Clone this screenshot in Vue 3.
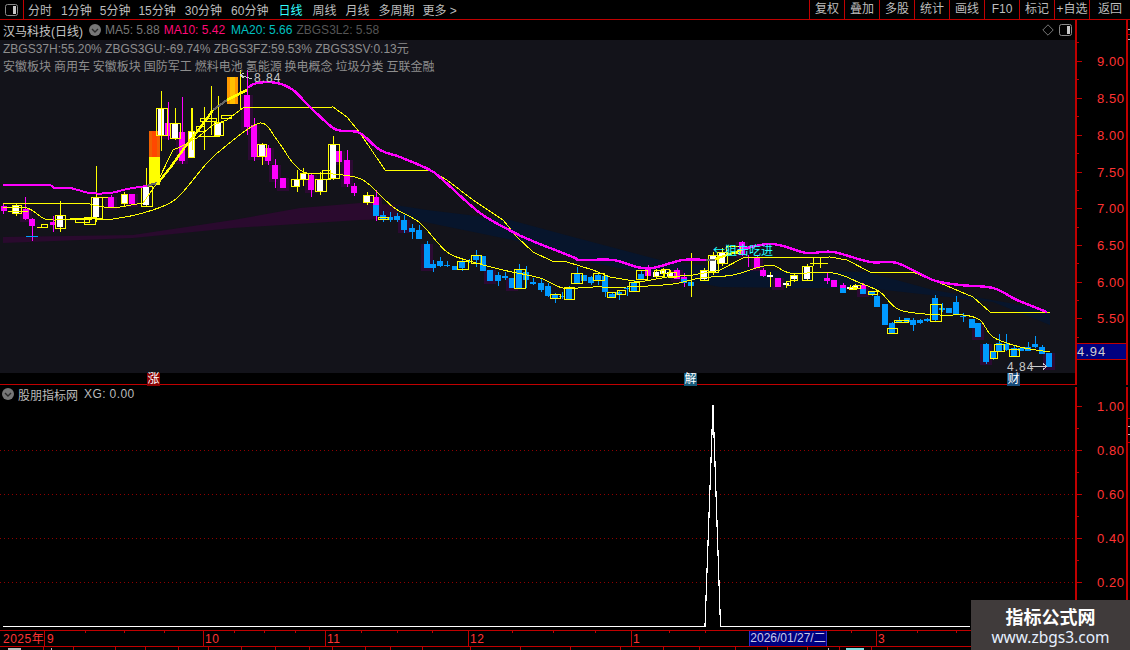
<script setup>
const leftTabs = [
  { t: '分时', x: 4 }, { t: '1分钟', x: 9 }, { t: '5分钟', x: 8 }, { t: '15分钟', x: 8 }, { t: '30分钟', x: 9 },
  { t: '60分钟', x: 9 }, { t: '日线', x: 10, on: true }, { t: '周线', x: 10 }, { t: '月线', x: 9 }, { t: '多周期', x: 9 }, { t: '更多 >', x: 8 }
]
const rightBtns = ['复权', '叠加', '多股', '统计', '画线', 'F10', '标记', '+自选', '返回']
const concepts = '安徽板块 商用车 安徽板块 国防军工 燃料电池 氢能源 换电概念 垃圾分类 互联金融'

const band1 = '3,237 133,235 233,220 300,208 360,203 400,205 400,219 360,220 233,228 133,238 3,243'
const band2 = '395,205 427,210 510,220 573,237 660,260 743,270 867,272 933,290 1050,310 1050,325 993,302 867,288 800,288 720,287 593,263 527,243 400,217'

function smooth(str) {
  const p = str.split(' ').map(s => s.split(',').map(Number))
  let d = `M${p[0][0]} ${p[0][1]}`
  for (let i = 0; i < p.length - 1; i++) {
    const a = p[Math.max(i - 1, 0)], b = p[i], c = p[i + 1], e = p[Math.min(i + 2, p.length - 1)]
    const k = 6
    const c1 = [b[0] + (c[0] - a[0]) / k, b[1] + (c[1] - a[1]) / k]
    const c2 = [c[0] - (e[0] - b[0]) / k, c[1] - (e[1] - b[1]) / k]
    d += `C${c1[0].toFixed(1)} ${c1[1].toFixed(1)} ${c2[0].toFixed(1)} ${c2[1].toFixed(1)} ${c[0]} ${c[1]}`
  }
  return d
}

const magentaA = smooth('3,185 47,185 55,188 70,188 90,193 110,193 127,189 140,187 147,186')
const greyA = '147,186 157,183'
const thickY = '157,184 170,168 185,147 200,128 213,110'
const greyB = '213,110 227,100'
const thickY2 = '227,100 247,90'
const magentaB = smooth('247,88 257,83 277,83 293,90 310,107 333,128 345,131 360,133 380,150 400,157 430,170 443,180 480,213 513,232 530,240 573,257 580,260 613,260 637,267 653,268 683,260 706,260')
const greyC = '706,260 715,260'
const thickY3 = '715,259 742,250'
const magentaC = smooth('742,249 767,244 783,246 807,253 833,252 870,262 897,263 933,280 960,285 993,288 1017,300 1047,312')
const yellow1 = '3,203 87,203 93,205 110,208 120,207 143,203 157,183 173,150 180,147 197,138 213,125 227,120 243,108 333,107 347,117 360,133 385,170 430,170 447,180 473,200 503,220 517,237 533,252 552,261 567,262 593,270 610,277 640,282 667,277 693,275 720,270 743,258 830,257 847,260 870,272 913,272 933,280 973,297 990,312 1050,312'
const yellow2 = smooth('3,208 27,208 43,218 53,220 93,219 113,219 143,213 170,203 183,192 207,163 227,145 260,123 277,140 293,163 307,173 333,174 363,180 393,207 420,223 447,252 473,262 503,270 540,278 563,288 593,287 627,287 673,284 700,278 733,275 770,265 790,273 833,273 860,283 880,292 900,310 940,315 963,315 980,320 993,337 1020,347 1050,352')

// x, top, bottom, wick top, wick bottom, kind (m magenta, b blue, w white)
const bodies = [
  [3.5,206,211,204,214,'m'],[16,206,213,204,216,'w'],[25.5,209,219,197,220,'m'],[32,219,226,218,241,'m'],[53,222,225,216,232,'m'],
  [60,216,227,201,232,'w'],[96,198,217,166,222,'w'],[111,197,207,195,208,'m'],[124,195,203,192,206,'w'],[132,194,204,194,204,'m'],
  [146,187,205,168,206,'w'],[161,108,135,91,151,'w'],[168,123,136,102,140,'m'],[175,124,138,108,140,'w'],[182,132,161,97,164,'m'],
  [191,132,157,108,158,'w'],[218,123,135,96,137,'w'],[247,95,127,70,135,'m'],[254,125,157,118,161,'m'],[262,144,156,143,165,'w'],
  [268,148,161,145,165,'m'],[275,165,179,159,188,'m'],[283,178,188,178,188,'m'],[297,180,186,170,192,'w'],[303,173,179,168,186,'w'],
  [311,175,190,173,197,'m'],[320,179,192,172,195,'w'],[333,145,178,136,180,'w'],[339,151,162,150,172,'m'],[347,160,184,150,187,'m'],
  [354,186,193,183,196,'m'],[367,196,203,192,205,'w'],[376,197,216,190,221,'m2'],
  [383,215,220,211,222,'b'],[390,217,220,212,222,'b'],[397,216,220,213,222,'b'],[404,220,230,215,233,'b'],[412,228,232,224,239,'b'],
  [419,230,239,225,239,'b'],[427,244,268,241,268,'b'],[433,264,268,260,272,'b'],[440,261,266,257,267,'b'],[447,265,266,261,267,'b'],
  [455,266,270,266,270,'b'],[462,262,268,259,271,'b'],[469,261,262,259,263,'b'],[476,255,260,250,267,'b'],[483,256,271,256,271,'b'],
  [490,270,281,270,281,'b'],[498,275,281,272,286,'b'],[505,276,278,272,280,'b'],[512,278,288,278,288,'b'],[519,269,288,264,288,'b'],
  [526,272,280,266,288,'b'],[533,282,284,278,285,'b'],[541,283,290,279,292,'b'],[548,286,296,283,297,'b'],[555,294,299,293,303,'b'],
  [562,296,297,292,299,'b'],[569,287,299,286,299,'b'],[577,273,283,267,283,'b'],[584,275,281,275,281,'b'],[591,277,283,276,285,'b'],
  [598,275,280,273,285,'b'],[605,276,292,275,297,'b'],[612,294,297,292,298,'b'],[619,292,295,291,300,'b'],[627,288,289,286,296,'b'],
  [634,282,291,280,291,'b'],[641,274,279,270,279,'b'],[648,268,276,265,276,'m'],[656,272,277,269,278,'w'],[663,270,274,268,277,'w'],
  [670,272,277,270,278,'w'],[677,270,279,268,279,'m'],[684,277,283,273,287,'m2'],[691,282,286,280,286,'b'],[704,271,279,268,281,'w'],
  [713,255,272,252,275,'w'],[722,252,263,248,266,'w'],[742,242,255,241,256,'m'],[748,257,258,255,267,'m'],[757,258,268,256,268,'m'],
  [763,270,276,268,277,'m'],[770,275,277,272,287,'w'],[778,278,287,278,287,'m'],[786,283,285,282,288,'w'],[794,276,279,274,282,'w'],
  [807,267,279,264,280,'w'],[827,278,281,273,284,'m'],[834,280,287,280,287,'m'],[843,285,293,283,293,'m2'],[850,287,289,285,290,'w'],
  [855,286,288,284,290,'w'],[863,285,294,283,294,'m2'],[872,292,294,291,296,'b'],[877,296,307,295,307,'b'],[885,304,325,304,325,'b'],
  [892,323,333,322,333,'b'],[899,320,322,317,323,'b'],[907,318,322,318,323,'b'],[913,320,325,318,331,'b'],[920,320,323,319,324,'b'],
  [927,319,321,318,322,'b'],[935,298,320,295,321,'b'],[942,308,310,303,312,'b'],[949,308,313,308,313,'b'],[956,302,314,296,314,'b'],
  [963,316,317,313,322,'b'],[972,319,328,319,328,'b'],[978,323,337,323,337,'b'],[986,344,362,343,364,'b'],[993,351,358,351,360,'b'],
  [999,343,351,334,351,'b'],[1006,344,350,334,351,'b'],[1014,348,356,346,356,'b'],[1021,348,351,347,351,'b'],[1028,347,351,342,351,'b'],
  [1035,344,347,336,348,'b'],[1042,347,354,345,354,'b'],[1049,353,367,353,367,'b']
]
// yellow hollow boxes: x, y, w, h
const boxes = [
  [12,205,9,8],[41,224,6,3],[55,215,10,13],[75,219,14,3],[84,217,11,7],[91,197,11,21],[121,194,6,9],[141,186,11,20],[156,108,11,27],[170,123,10,15],
  [188,131,6,26],[196,126,8,5],[200,118,16,3],[214,122,9,13],[221,115,10,3],[257,144,9,12],[291,179,8,7],[300,173,8,6],[315,179,11,12],[328,144,11,34],
  [322,170,8,9],[363,195,10,7],[378,217,10,2],[457,261,11,8],[471,255,10,8],[514,269,11,19],[550,294,10,4],[564,287,10,12],[571,273,11,10],
  [593,273,11,7],[607,292,8,5],[617,290,8,4],[629,282,10,9],[636,270,11,9],[654,270,10,6],[661,269,8,4],[668,272,8,5],[700,270,8,10],[708,255,10,17],
  [717,252,10,11],[726,246,14,7],[786,281,4,4],[790,275,7,5],[802,266,10,14],[849,287,7,2],[853,285,7,3],[868,291,9,3],[887,328,10,5],
  [894,320,14,2],[930,304,11,17],[994,344,10,7],[990,351,7,7],[1009,349,10,7]
]
const yWicks = [[161,91,151],[204,107,150],[211,86,135],[192,108,150],[240,70,110],[691,253,297],[820,258,268],[60,201,215],[96,166,197],[146,168,186],[813,258,266]]
const yBars = [[8,211,20,1],[37,227,10,1],[70,218,30,1],[810,263,18,1],[200,136,20,1],[102,197,6,1]]

function wickColor(k) { return k === 'w' ? '#ffff00' : (k === 'b' ? '#0099ff' : '#ff00ff') }
const candles = bodies.map(([x, t, b, wt, wb, k]) => ({
  x, t, b, wt, wb, k,
  wick: wickColor(k),
  halo: b - t >= 9 && k !== 'w' && (k !== 'b' || x > 1040 || x === 986 || x === 978 || x === 427 || x === 404 || x === 512 || x === 490),
  fill: k === 'w' ? '#ffffff' : (k === 'b' ? '#0099ff' : '#ff00ff')
}))

const priceLabels = [['9.00',61],['8.50',98],['8.00',135],['7.50',172],['7.00',208],['6.50',245],['6.00',282],['5.50',318]]
const priceMinor = [42,79,116,153,190,227,263,300,337]
const subLabels = [['1.00',406],['0.80',450],['0.60',494],['0.40',538],['0.20',582]]
const subMinor = [428,472,516,560,604]
const gridYs = [450,494,538,582]
const timeLabels = [['9',47,44.5],['10',205,203],['11',327,325],['12',470,468],['1',633,631],['3',878,876]]
const timeTicks = [85,124,164,234,264,295,361,397,432,512,553,595,669,705,851,917,956]
const footDividers = [43,73,115,145,178,208,241,275,309,332,365,390,422,470,520,570,620,663,699,735,767,807,839,871]
</script>

<template>
  <div class="app">
    <header class="toolbar">
      <div class="logo-cell">
        <svg class="toggle" viewBox="0 0 13 12"><rect x="0.5" y="0.5" width="12" height="11" rx="2" fill="none" stroke="#8a8a8a"/><rect x="8" y="2" width="3" height="8" fill="#c8c8c8"/></svg>
      </div>
      <nav class="tabs">
        <span v-for="tab in leftTabs" :key="tab.t" class="tab" :class="{ on: tab.on }" :style="{ marginLeft: tab.x + 'px' }">{{ tab.t }}</span>
      </nav>
      <div class="btns">
        <span v-for="b in rightBtns" :key="b" class="btn">{{ b }}</span>
      </div>
    </header>

    <section class="main">
      <div class="chart-col">
        <div class="info">
          <span class="stock">汉马科技(日线)</span>
          <svg class="chev" viewBox="0 0 12 12"><circle cx="6" cy="6" r="6" fill="#777"/><path d="M3 5l3 3 3-3" fill="none" stroke="#2a2a2a" stroke-width="1.4"/></svg>
          <span class="ma ma5">MA5: 5.88</span>
          <span class="ma ma10">MA10: 5.42</span>
          <span class="ma ma20">MA20: 5.66</span>
          <span class="ma ma3">ZBGS3L2: 5.58</span>
          <span class="info-right">
            <svg class="diamond" viewBox="0 0 12 12"><path d="M6 .8L11.2 6 6 11.2.8 6z" fill="none" stroke="#777"/></svg>
            <svg class="toggle" viewBox="0 0 13 12"><rect x="0.5" y="0.5" width="12" height="11" rx="2" fill="none" stroke="#8a8a8a"/><rect x="8" y="2" width="3" height="8" fill="#c8c8c8"/></svg>
          </span>
        </div>
        <div class="plot">
          <svg class="plot-svg" viewBox="0 40 1075 333" width="1075" height="333">
            <polygon :points="band1" fill="#2a0a2e"/>
            <polygon :points="band2" fill="#07152c"/>
            <g shape-rendering="crispEdges">
              <template v-for="c in candles" :key="'h' + c.x">
                <rect v-if="c.halo" :x="Math.round(c.x - 6)" :y="c.t" width="12" :height="c.b - c.t + 3" fill="#2c0a33"/>
              </template>
              <rect x="149" y="131" width="11" height="26" fill="#f06000"/>
              <rect x="152" y="131" width="5" height="26" fill="#ff4800"/>
              <rect x="149" y="157" width="11" height="28" fill="#ffff00"/>
              <rect x="227" y="77" width="11" height="27" fill="#ff9900"/>
              <rect x="230" y="77" width="5" height="27" fill="#ffc000"/>
              <template v-for="c in candles" :key="'c' + c.x">
                <line :x1="c.x" :x2="c.x" :y1="c.wt" :y2="c.wb" :stroke="c.wick" stroke-width="1"/>
                <rect :x="Math.round(c.x - 3)" :y="c.t" width="6" :height="c.b - c.t" :fill="c.fill"/>
                <rect v-if="c.k === 'm2'" :x="Math.round(c.x - 3)" :y="c.t + (c.b - c.t) * 0.4" width="6" :height="(c.b - c.t) * 0.6" fill="#0099ff"/>
              </template>
              <rect v-for="b in boxes" :key="'b' + b[0] + b[1]" :x="b[0] + 0.5" :y="b[1] + 0.5" :width="b[2]" :height="b[3]" fill="none" stroke="#ffff00"/>
              <line v-for="w in yWicks" :key="'w' + w[0]" :x1="w[0] + 0.5" :x2="w[0] + 0.5" :y1="w[1]" :y2="w[2]" stroke="#ffff00"/>
              <rect v-for="b in yBars" :key="'y' + b[0]" :x="b[0]" :y="b[1]" :width="b[2]" :height="b[3]" fill="#ffff00"/>
              <line x1="26" x2="38" y1="236.5" y2="236.5" stroke="#00a0ff"/>
              <path :d="yellow2" class="ln" stroke="#ffff00" stroke-width="1"/>
              <polyline :points="yellow1" class="ln" stroke="#ffff00" stroke-width="1"/>
              <path :d="magentaA" class="ln" stroke="#ff00ff" stroke-width="2"/>
              <path :d="magentaB" class="ln" stroke="#ff00ff" stroke-width="2.4"/>
              <path :d="magentaC" class="ln" stroke="#ff00ff" stroke-width="2.4"/>
              <polyline :points="greyA" class="ln" stroke="#666" stroke-width="2.2"/>
              <polyline :points="greyB" class="ln" stroke="#666" stroke-width="2.2"/>
              <polyline :points="greyC" class="ln" stroke="#666" stroke-width="2.2"/>
              <polyline :points="thickY" class="ln" stroke="#ffff00" stroke-width="2.4"/>
              <polyline :points="thickY2" class="ln" stroke="#ffff00" stroke-width="2.4"/>
              <polyline :points="thickY3" class="ln" stroke="#ffff00" stroke-width="2.4"/>
              <path d="M240 75L252 79M240 75l4-2M240 75l4 3" class="ln" stroke="#ccc"/>
              <path d="M1030 366.5H1047M1047 366.5l-4-3M1047 366.5l-4 3" class="ln" stroke="#ccc"/>
            </g>
            <text x="254" y="82" class="anno">8.84</text>
            <text x="1007" y="371" class="anno">4.84</text>
            <text x="713" y="255" class="signal">←狙击吃进</text>
          </svg>
          <div class="row-a">ZBGS37H:55.20% ZBGS3GU:-69.74% ZBGS3FZ:59.53% ZBGS3SV:0.13元</div>
          <div class="row-b">{{ concepts }}</div>
        </div>
        <div class="marks">
          <span class="mark rise">涨</span>
          <span class="mark unlock">解</span>
          <span class="mark fin">财</span>
        </div>
      </div>
      <div class="scale">
        <svg viewBox="1077 20 49 365" width="49" height="365">
          <g shape-rendering="crispEdges" stroke="#c00000">
            <line v-for="p in priceLabels" :key="p[0]" x1="1077" x2="1082" :y1="p[1] + 0.5" :y2="p[1] + 0.5"/>
            <line v-for="m in priceMinor" :key="m" x1="1077" x2="1079" :y1="m + 0.5" :y2="m + 0.5"/>
          </g>
          <text v-for="p in priceLabels" :key="'t' + p[0]" x="1097" :y="p[1] + 5" class="num">{{ p[0] }}</text>
          <rect x="1077" y="343" width="49" height="17" fill="#000080"/>
          <line x1="1077" x2="1126" y1="343.5" y2="343.5" stroke="#c00000"/>
          <line x1="1077" x2="1126" y1="359.5" y2="359.5" stroke="#c00000"/>
          <text x="1077" y="356" class="cur">4.94</text>
        </svg>
      </div>
      <div class="strip top-strip">
        <i class="tick"></i><i class="tick red"></i><i class="tick"></i>
      </div>
    </section>

    <section class="sub">
      <div class="chart-col sub-plot">
        <svg class="plot-svg" viewBox="0 387 1075 243" width="1075" height="243">
          <line v-for="y in gridYs" :key="y" x1="0" x2="1075" :y1="y + 0.5" :y2="y + 0.5" stroke="#900000" stroke-dasharray="1 3" shape-rendering="crispEdges"/>
          <polyline points="3,626.5 705,626.5 713,405 720.5,626.5 970,626.5" fill="none" stroke="#fff" stroke-width="1.2" shape-rendering="crispEdges"/>
        </svg>
        <div class="sub-head">
          <svg class="chev" viewBox="0 0 12 12"><circle cx="6" cy="6" r="6" fill="#777"/><path d="M3 5l3 3 3-3" fill="none" stroke="#2a2a2a" stroke-width="1.4"/></svg>
          <span>股朋指标网</span>
          <span class="xg">XG: 0.00</span>
        </div>
      </div>
      <div class="scale">
        <svg viewBox="1077 387 49 243" width="49" height="243">
          <g shape-rendering="crispEdges" stroke="#c00000">
            <line v-for="p in subLabels" :key="p[0]" x1="1077" x2="1082" :y1="p[1] + 0.5" :y2="p[1] + 0.5"/>
            <line v-for="m in subMinor" :key="m" x1="1077" x2="1079" :y1="m + 0.5" :y2="m + 0.5"/>
          </g>
          <text v-for="p in subLabels" :key="'s' + p[0]" x="1097" :y="p[1] + 5" class="num">{{ p[0] }}</text>
        </svg>
      </div>
      <div class="strip">
        <i class="tick red"></i><i class="tick"></i><i class="tick"></i><i class="tick red"></i>
      </div>
    </section>

    <section class="timebar">
      <svg viewBox="0 0 1130 15" width="1130" height="15">
        <g shape-rendering="crispEdges" stroke="#c00000">
          <line v-for="t in timeTicks" :key="t" :x1="t + 0.5" :x2="t + 0.5" y1="0" y2="2"/>
          <line v-for="l in timeLabels" :key="'v' + l[1]" :x1="l[2]" :x2="l[2]" y1="0" y2="15"/>
        </g>
        <text x="3" y="12" class="tlabel">2025年</text>
        <text v-for="l in timeLabels" :key="l[0]" :x="l[1]" y="12" class="tlabel">{{ l[0] }}</text>
      </svg>
      <span class="date">2026/01/27/二</span>
    </section>

    <footer class="foot">
      <svg viewBox="0 0 1130 4" width="1130" height="4">
        <line v-for="d in footDividers" :key="d" :x1="d + 0.5" :x2="d + 0.5" y1="0" y2="4" stroke="#c00000" shape-rendering="crispEdges"/>
        <rect x="8" y="1" width="13" height="3" fill="#bbb"/>
        <rect x="51" y="1" width="1" height="3" fill="#bbb"/>
        <rect x="828" y="1" width="1" height="3" fill="#bbb"/>
        <rect x="846" y="1" width="18" height="3" fill="#7fe0e0"/>
      </svg>
    </footer>

    <aside class="watermark">
      <div class="wm-a">指标公式网</div>
      <div class="wm-b">www.zbgs3.com</div>
    </aside>
  </div>
</template>

<style scoped>
.app {
  position: relative;
  width: 1130px;
  height: 650px;
  overflow: hidden;
  background: #000;
  display: flex;
  flex-direction: column;
  font-family: "Liberation Sans", "Noto Sans CJK SC", sans-serif;
  color: #bdbdbd;
}
.toolbar {
  height: 19px;
  border-bottom: 1px solid #c00000;
  display: flex;
  align-items: stretch;
  flex: none;
}
.logo-cell {
  width: 23px;
  border-right: 1px solid #c00000;
  display: flex;
  align-items: center;
  justify-content: center;
}
.toggle { width: 13px; height: 12px; display: block; }
.tabs { display: flex; align-items: center; flex: 1; font-size: 12px; }
.tab { white-space: nowrap; }
.tab.on { color: #3ff; }
.btns { display: flex; }
.btn {
  width: 34px;
  border-left: 1px solid #c00000;
  text-align: center;
  font-size: 12px;
  line-height: 19px;
  white-space: nowrap;
}
.btn:last-child { width: 40px; }

.main { display: flex; height: 365px; flex: none; }
.chart-col { width: 1075px; flex: none; position: relative; }
.scale {
  width: 49px;
  flex: none;
  border-left: 2px solid #c00000;
  border-right: 2px solid #c00000;
}
.scale svg { display: block; }
.strip { flex: 1; position: relative; display: flex; flex-direction: column; gap: 7px; padding-top: 31px; }
.top-strip { padding-top: 9px; gap: 4px; }
.tick { display: block; height: 1px; background: #bbb; }
.tick.red { background: #c00000; }

.info { height: 20px; display: flex; align-items: center; padding-left: 3px; font-size: 12px; white-space: nowrap; }
.stock { font-size: 12px; color: #c4c4c4; width: 86px; }
.chev { width: 12px; height: 12px; display: block; flex: none; }
.ma { margin-left: 4px; }
.ma5 { color: #777; }
.ma10 { color: #ff0a78; }
.ma20 { color: #00c0c0; margin-left: 6px; }
.ma3 { color: #555; }
.info-right { margin-left: auto; display: flex; align-items: center; gap: 5px; padding-right: 3px; }
.diamond { width: 12px; height: 12px; display: block; }

.plot { position: relative; height: 333px; background: #13131a; }
.plot-svg { position: absolute; left: 0; top: 0; display: block; }
.row-a, .row-b { position: relative; padding-left: 3px; color: #8e8e8e; font-size: 12px; white-space: nowrap; }
.row-a { line-height: 18px; }
.row-b { line-height: 12px; margin-top: 3px; word-spacing: -0.4px; }
.ln { fill: none; }
.anno { font: 12px "Liberation Sans", sans-serif; letter-spacing: 1px; fill: #c8c8c8; }
.signal { font: 12px "Noto Sans CJK SC", sans-serif; fill: #2ff; }

.marks { position: relative; border-bottom: 1px solid #c00000; height: 11px; }
.mark {
  position: absolute;
  top: 0;
  width: 13px;
  height: 13px;
  color: #fff;
  font-size: 12px;
  line-height: 13px;
  text-align: center;
}
.rise { left: 147px; background: #8a0000; }
.unlock { left: 684px; background: #155a7a; }
.fin { left: 1007px; background: #174a78; }

.num { font: 13px "Liberation Sans", sans-serif; letter-spacing: .6px; fill: #ff3333; }
.cur { font: 13px "Liberation Sans", sans-serif; letter-spacing: 1px; fill: #cfcfcf; }

.sub { display: flex; height: 243px; flex: none; border-top: 2px solid transparent; }
.sub-plot { height: 243px; }
.sub-head {
  position: relative;
  display: flex;
  align-items: center;
  height: 14px;
  padding-left: 2px;
  font-size: 12px;
  color: #bbb;
  gap: 4px;
}
.xg { margin-left: 2px; letter-spacing: .4px; }

.timebar {
  position: relative;
  height: 15px;
  flex: none;
  border-top: 1px solid #c00000;
  border-bottom: 1px solid #c00000;
}
.timebar svg { display: block; }
.tlabel { font: 12px "Liberation Sans", "Noto Sans CJK SC", sans-serif; letter-spacing: .5px; fill: #ff3333; }
.date {
  position: absolute;
  left: 749px;
  top: 0;
  width: 78px;
  height: 15px;
  box-sizing: border-box;
  background: #000080;
  border-left: 1px solid #2a2ad0;
  border-right: 1px solid #2a2ad0;
  color: #c8c8e8;
  font-size: 12px;
  line-height: 15px;
  text-align: center;
  white-space: nowrap;
}
.foot { height: 4px; flex: none; }
.foot svg { display: block; }

.watermark {
  position: absolute;
  right: 0;
  bottom: 0;
  width: 159px;
  height: 50px;
  background: #403b3b;
  text-align: center;
}
.wm-a { font: bold 18px/22px "Noto Sans CJK SC", sans-serif; color: #fff; margin-top: 5px; }
.wm-b { font: 15.5px/20px "Noto Sans", sans-serif; color: #e6f0ff; }
</style>
